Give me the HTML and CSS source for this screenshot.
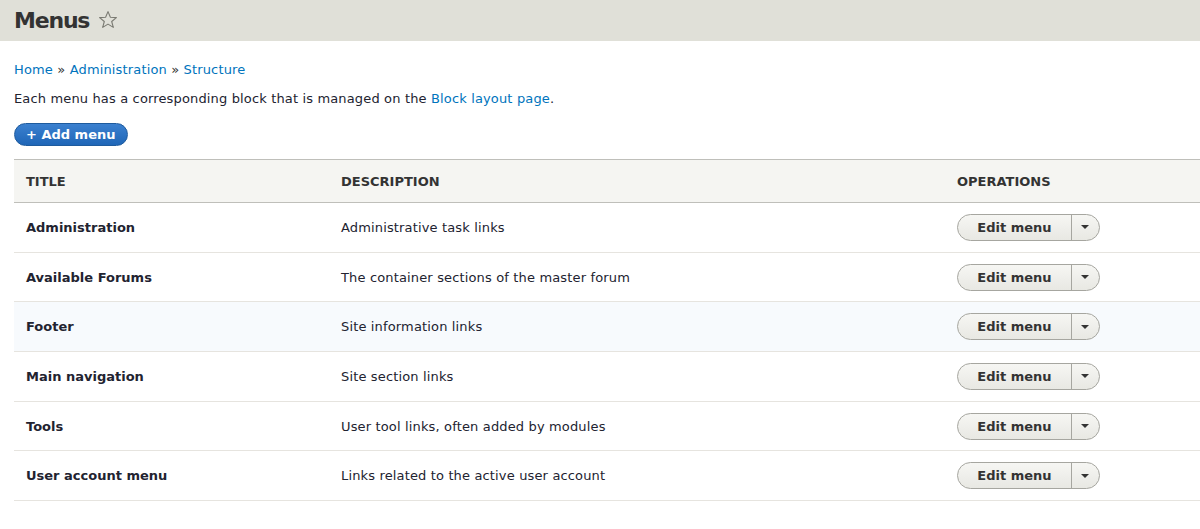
FILE: index.html
```html
<!DOCTYPE html>
<html>
<head>
<meta charset="utf-8">
<link rel="stylesheet" href="styles.css">
</head>
<body>
<header class="page-header">
  <h1 class="page-title">Menus</h1>
  <svg class="star" width="20" height="20" viewBox="0 0 20 20"><path d="M10 1.6 L12.4 7.3 L18.4 7.6 L13.7 11.5 L15.3 17.4 L10 14.1 L4.7 17.4 L6.3 11.5 L1.6 7.6 L7.6 7.3 Z" fill="none" stroke="#7a7a72" stroke-width="1.1" stroke-linejoin="round"/></svg>
</header>
<main class="content">
  <nav class="breadcrumb"><a href="#">Home</a> » <a href="#">Administration</a> » <a href="#">Structure</a></nav>
  <p class="help">Each menu has a corresponding block that is managed on the <a href="#">Block layout page</a>.</p>
  <div class="actions"><a class="btn-primary" href="#">+ Add menu</a></div>
  <table class="menus">
    <thead>
      <tr><th class="c-title">TITLE</th><th class="c-desc">DESCRIPTION</th><th class="c-ops">OPERATIONS</th></tr>
    </thead>
    <tbody>
      <tr><td class="c-title">Administration</td><td>Administrative task links</td><td><div class="dropbutton"><span class="main">Edit menu</span><span class="toggle"><span class="arrow"></span></span></div></td></tr>
      <tr><td class="c-title">Available Forums</td><td>The container sections of the master forum</td><td><div class="dropbutton"><span class="main">Edit menu</span><span class="toggle"><span class="arrow"></span></span></div></td></tr>
      <tr class="hover"><td class="c-title">Footer</td><td>Site information links</td><td><div class="dropbutton"><span class="main">Edit menu</span><span class="toggle"><span class="arrow"></span></span></div></td></tr>
      <tr><td class="c-title">Main navigation</td><td>Site section links</td><td><div class="dropbutton"><span class="main">Edit menu</span><span class="toggle"><span class="arrow"></span></span></div></td></tr>
      <tr><td class="c-title">Tools</td><td>User tool links, often added by modules</td><td><div class="dropbutton"><span class="main">Edit menu</span><span class="toggle"><span class="arrow"></span></span></div></td></tr>
      <tr><td class="c-title">User account menu</td><td>Links related to the active user account</td><td><div class="dropbutton"><span class="main">Edit menu</span><span class="toggle"><span class="arrow"></span></span></div></td></tr>
    </tbody>
  </table>
</main>
</body>
</html>
```
FILE: styles.css
```css
* { box-sizing: border-box; }
html, body { margin: 0; padding: 0; background: #fff; }
body {
  font-family: "DejaVu Sans", "Liberation Sans", sans-serif;
  font-size: 13px;
  letter-spacing: 0.15px;
  color: #222330;
  overflow: hidden;
  width: 1200px;
}
a { color: #0074bd; text-decoration: none; }
.page-header {
  background: #e0e0d8;
  height: 41px;
  display: flex;
  align-items: center;
  padding-left: 14px;
}
.page-title {
  margin: 0;
  font-size: 22px;
  font-weight: bold;
  color: #333;
  line-height: 1;
  letter-spacing: -1.2px;
}
.star { margin-left: 9px; margin-top: -2px; }
.content { padding: 0 0 0 14px; }
.breadcrumb { margin-top: 20px; height: 18px; line-height: 18px; color: #333; }
.help { margin: 11px 0 0 0; line-height: 18px; }
.actions { margin-top: 15px; }
.btn-primary {
  display: inline-block;
  height: 23px;
  line-height: 21px;
  padding: 0 11px 0 11px;
  border-radius: 12px;
  background: linear-gradient(#3b80cf, #1f66b7);
  border: 1px solid #1e5b9e;
  color: #fff;
  font-weight: bold;
  font-size: 13px;
  letter-spacing: 0;
}
.menus {
  margin-top: 13px;
  width: 1200px;
  border-collapse: collapse;
  border-top: 1px solid #bfbfba;
}
.menus th {
  background: #f5f5f2;
  height: 43px;
  text-align: left;
  font-weight: bold;
  font-size: 13px;
  padding: 0 12px;
  border-bottom: 1px solid #bfbfba;
  color: #333;
  letter-spacing: 0;
}
.menus td {
  height: 49.7px;
  padding: 0 12px;
  border-bottom: 1px solid #e6e4df;
}
.menus td.c-title { font-weight: bold; letter-spacing: 0; }
.c-title { width: 315px; }
.c-desc { width: 616px; }
.menus tr.hover td { background: #f7fafd; }
.dropbutton {
  display: inline-flex;
  height: 27px;
  border: 1px solid #a6a6a0;
  border-radius: 14px;
  background: linear-gradient(#f6f6f3, #e8e8e3);
  overflow: hidden;
  vertical-align: middle;
}
.dropbutton .main {
  width: 113px;
  text-align: center;
  line-height: 25px;
  font-weight: bold;
  color: #333;
  letter-spacing: 0;
}
.dropbutton .toggle {
  width: 28px;
  border-left: 1px solid #a6a6a0;
  display: flex;
  align-items: center;
  justify-content: center;
}
.dropbutton .arrow {
  width: 0; height: 0;
  border-left: 4px solid transparent;
  border-right: 4px solid transparent;
  border-top: 4px solid #333;
  margin-left: -2px;
}
```
